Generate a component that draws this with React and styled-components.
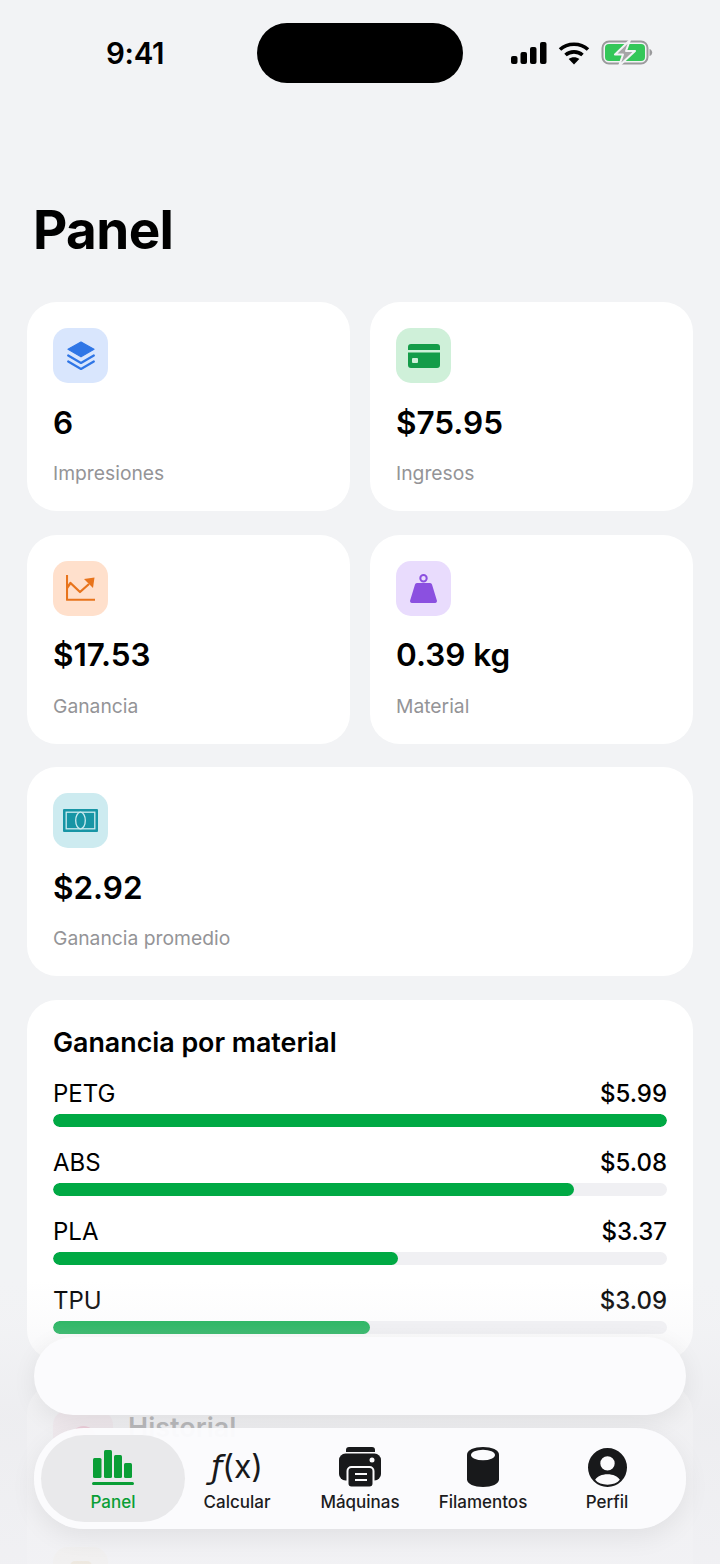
import React from 'react'
import styled, { createGlobalStyle } from 'styled-components'

const stats = [
  { value: '6', label: 'Impresiones', bg: '#d9e6fd', icon: 'layers' },
  { value: '$75.95', label: 'Ingresos', bg: '#cff0d9', icon: 'card' },
  { value: '$17.53', label: 'Ganancia', bg: '#ffe0cc', icon: 'chart' },
  { value: '0.39 kg', label: 'Material', bg: '#e9dcfd', icon: 'weight' },
  { value: '$2.92', label: 'Ganancia promedio', bg: '#cdebf0', icon: 'money', wide: true },
]

const materials = [
  { name: 'PETG', amount: 5.99 },
  { name: 'ABS', amount: 5.08 },
  { name: 'PLA', amount: 3.37 },
  { name: 'TPU', amount: 3.09 },
]

const StatIcon = ({ name }) => {
  if (name === 'layers') {
    return (
      <svg width="28" height="30" viewBox="0 0 28 30">
        <path d="M14 1 27 8.300 14 15.800 1 8.300Z" fill="#2f76e6" stroke="#2f76e6" strokeWidth="1.200" strokeLinejoin="round" />
        <path d="M1.200 14.500 14 22 26.800 14.500M1.200 20.500 14 28 26.800 20.500" fill="none" stroke="#2f76e6" strokeWidth="2.200" strokeLinecap="round" strokeLinejoin="round" />
      </svg>
    )
  }
  if (name === 'card') {
    return (
      <svg width="32" height="24" viewBox="0 0 32 24">
        <path d="M3 0h26a3 3 0 0 1 3 3v3H0V3a3 3 0 0 1 3-3ZM0 8.500h32V21a3 3 0 0 1-3 3H3a3 3 0 0 1-3-3Z" fill="#149c49" />
        <rect x="4" y="14" width="6" height="5" rx="1" fill="#cff0d9" />
      </svg>
    )
  }
  if (name === 'chart') {
    return (
      <svg width="29" height="26" viewBox="0 0 29 26">
        <path d="M1 0v24.800h27.500" fill="none" stroke="#e8741c" strokeWidth="2.100" strokeLinecap="round" strokeLinejoin="round" />
        <path d="M1 13 4.500 8 14 17 23 9" fill="none" stroke="#e8741c" strokeWidth="2.300" strokeLinejoin="round" />
        <path d="M18 4 28.500 2.500 27 13Z" fill="#e8741c" />
      </svg>
    )
  }
  if (name === 'weight') {
    return (
      <svg width="27" height="29" viewBox="0 0 27 29">
        <circle cx="13.500" cy="4.300" r="3.200" fill="none" stroke="#8b50e0" strokeWidth="2" />
        <path d="M7 9h13a2 2 0 0 1 2 1.600l4.800 15.600a2 2 0 0 1-2 2.800H2.200a2 2 0 0 1-2-2.800L5 10.600A2 2 0 0 1 7 9Z" fill="#8b50e0" />
      </svg>
    )
  }
  return (
    <svg width="35" height="23" viewBox="0 0 35 23">
      <rect width="35" height="23" rx="1" fill="#1795a5" />
      <rect x="3.200" y="3.200" width="28.600" height="16.600" fill="none" stroke="#cdebf0" strokeWidth="1.300" />
      <ellipse cx="17.500" cy="11.500" rx="4.800" ry="8.300" fill="#1795a5" stroke="#cdebf0" strokeWidth="1.300" />
    </svg>
  )
}

const TabIcon = ({ name }) => {
  if (name === 'panel') {
    return (
      <svg width="42" height="35" viewBox="0 0 42 35">
        <g fill="#0a9e36">
          <rect x="1" y="8" width="8.500" height="20" rx="1.500" />
          <rect x="12" y="0" width="8" height="28" rx="1.500" />
          <rect x="22" y="5" width="8" height="23" rx="1.500" />
          <rect x="32" y="13" width="8" height="15" rx="1.500" />
          <rect x="0" y="32" width="42" height="3" rx="1.500" />
        </g>
      </svg>
    )
  }
  if (name === 'printer') {
    return (
      <svg width="42" height="41" viewBox="0 0 42 41">
        <path d="M10 0h23a3 3 0 0 1 3 3v2H7V3a3 3 0 0 1 3-3Z" fill="#18191b" />
        <rect x="0" y="6.500" width="42" height="27" rx="6.500" fill="#18191b" />
        <circle cx="33" cy="13" r="2.500" fill="#fbfbfd" />
        <rect x="8.500" y="20" width="26" height="20.500" rx="4" fill="#18191b" stroke="#fbfbfd" strokeWidth="2" />
        <path d="M16 27h12M16 33h12" stroke="#fbfbfd" strokeWidth="2.200" />
      </svg>
    )
  }
  if (name === 'spool') {
    return (
      <svg width="32" height="40" viewBox="0 0 32 40">
        <path d="M16 0c8.800 0 16 3 16 7.500v25c0 4.500-7.200 7.500-16 7.500S0 37 0 32.500v-25C0 3 7.200 0 16 0Z" fill="#18191b" />
        <ellipse cx="16" cy="8" rx="12" ry="5.300" fill="#fbfbfd" />
      </svg>
    )
  }
  return (
    <svg width="39" height="39" viewBox="0 0 38 38">
      <path fillRule="evenodd" d="M19 0a19 19 0 1 1 0 38 19 19 0 0 1 0-38Zm0 8a7 7 0 1 0 0 14 7 7 0 0 0 0-14ZM7 31c2.500 3.200 7 4.800 12 4.800S28.500 34.200 31 31c-2-3.500-6.500-5.500-12-5.500S9 27.500 7 31Z" fill="#18191b" />
    </svg>
  )
}

const tabs = [
  { label: 'Panel', icon: 'panel', active: true },
  { label: 'Calcular', formula: true },
  { label: 'Máquinas', icon: 'printer' },
  { label: 'Filamentos', icon: 'spool' },
  { label: 'Perfil', icon: 'user' },
]

const App = () => {
  const top = Math.max(...materials.map((m) => m.amount))

  return (
    <Page>
      <GlobalStyle />
      <StatusBar>
        <Clock>9:41</Clock>
        <Island />
        <StatusIcons>
          <svg width="36" height="22" viewBox="0 0 36 22">
            <g fill="#000">
              <rect x="0" y="14" width="6.500" height="8" rx="2" />
              <rect x="9.500" y="10" width="6.500" height="12" rx="2" />
              <rect x="19" y="5" width="6.500" height="17" rx="2" />
              <rect x="29" y="0" width="6.500" height="22" rx="2" />
            </g>
          </svg>
          <svg width="32" height="24" viewBox="0 0 32 24">
            <path d="M2 8.500C9.500 1.500 22.500 1.500 30 8.500M7.500 14c4.600-4.200 12.400-4.200 17 0" fill="none" stroke="#000" strokeWidth="3.600" />
            <path d="M16 23.500 10.700 18c3-2.500 7.600-2.500 10.600 0Z" fill="#000" />
          </svg>
          <svg width="52" height="26" viewBox="0 0 52 26">
            <rect x="1.500" y="1.500" width="45" height="22" rx="6.500" fill="none" stroke="#9a9a9c" strokeWidth="2" />
            <rect x="4" y="4" width="40" height="17" rx="4" fill="#34c759" />
            <path d="M48.500 9c1.800.5 2.700 2 2.700 3.500S50.300 15.500 48.500 16Z" fill="#9a9a9c" />
            <path d="M29 0 14 14.500h8L18 26l16-15h-9Z" fill="#a5a5a7" stroke="#f2f3f5" strokeWidth="2" strokeLinejoin="round" />
          </svg>
        </StatusIcons>
      </StatusBar>

      <Title>Panel</Title>

      <Content>
        <StatGrid>
          {stats.map((s) => (
            <Card key={s.label} $wide={s.wide}>
              <IconTile $bg={s.bg}>
                <StatIcon name={s.icon} />
              </IconTile>
              <StatValue>{s.value}</StatValue>
              <StatLabel>{s.label}</StatLabel>
            </Card>
          ))}
        </StatGrid>

        <MaterialCard>
          <SectionTitle>Ganancia por material</SectionTitle>
          <MaterialList>
            {materials.map((m) => (
              <li key={m.name}>
                <MaterialRow>
                  <span>{m.name}</span>
                  <Amount>${m.amount.toFixed(2)}</Amount>
                </MaterialRow>
                <Track>
                  <Fill style={{ width: `${(m.amount / top) * 100}%` }} />
                </Track>
              </li>
            ))}
          </MaterialList>
        </MaterialCard>

        <LinkCard>
          <LinkRow>
            <LinkTile $bg="#fbdde6" $w={60}>
              <PinkDot />
            </LinkTile>
            <LinkTitle>Historial</LinkTitle>
          </LinkRow>
          <LinkRow>
            <LinkTile $bg="#faf0d6" $w={55}>
              <BeigeChip />
            </LinkTile>
          </LinkRow>
        </LinkCard>
      </Content>

      <BottomFade />
      <SearchPill />
      <TabBar>
        {tabs.map((t) => (
          <Tab key={t.label} $active={t.active}>
            <TabGlyph>
              {t.formula ? (
                <Formula>
                  <FormulaF>ƒ</FormulaF>(x)
                </Formula>
              ) : (
                <TabIcon name={t.icon} />
              )}
            </TabGlyph>
            <TabLabel $active={t.active}>{t.label}</TabLabel>
          </Tab>
        ))}
      </TabBar>
    </Page>
  )
}

const GlobalStyle = createGlobalStyle`
  html, body {
    margin: 0;
    padding: 0;
    background: #f2f3f5;
  }
  ul {
    margin: 0;
    padding: 0;
    list-style: none;
  }
`

const Page = styled.div`
  position: relative;
  width: 720px;
  height: 1564px;
  overflow: hidden;
  background: #f2f3f5;
  color: #000;
  font-family: Inter, "Liberation Sans", sans-serif;
`

const StatusBar = styled.div`
  display: flex;
  align-items: center;
  height: 60px;
  padding: 23px 67px 0 106px;
`

const Clock = styled.div`
  width: 151px;
  font-size: 29.5px;
  font-weight: 600;
  letter-spacing: -0.3px;
`

const Island = styled.div`
  width: 206px;
  height: 60px;
  border-radius: 30px;
  background: #000;
`

const StatusIcons = styled.div`
  display: flex;
  align-items: center;
  gap: 11px;
  margin-left: 48px;
`

const Title = styled.h1`
  margin: 113px 0 0 33px;
  font-size: 53px;
  line-height: 68px;
  font-weight: 700;
  letter-spacing: -0.6px;
`

const Content = styled.div`
  display: flex;
  flex-direction: column;
  gap: 24px;
  padding: 0 27px;
  margin-top: 38px;
`

const StatGrid = styled.div`
  display: grid;
  grid-template-columns: 1fr 1fr;
  gap: 23.5px 20px;
`

const Card = styled.div`
  grid-column: ${(p) => (p.$wide ? '1 / -1' : 'auto')};
  height: 209px;
  box-sizing: border-box;
  padding: 26px 26px 0;
  border-radius: 30px;
  background: #fff;
`

const IconTile = styled.div`
  display: flex;
  align-items: center;
  justify-content: center;
  width: 55px;
  height: 55px;
  border-radius: 15px;
  background: ${(p) => p.$bg};
`

const StatValue = styled.div`
  margin-top: 18.5px;
  font-size: 31.5px;
  line-height: 42px;
  font-weight: 600;
`

const StatLabel = styled.div`
  margin-top: 17.5px;
  font-size: 19.3px;
  line-height: 24px;
  color: #949497;
`

const MaterialCard = styled.div`
  padding: 26px;
  border-radius: 30px;
  background: #fff;
`

const SectionTitle = styled.h2`
  margin: 0;
  font-size: 26.8px;
  line-height: 32px;
  font-weight: 600;
`

const MaterialList = styled.ul`
  display: flex;
  flex-direction: column;
  gap: 19px;
  margin-top: 19px;
`

const MaterialRow = styled.div`
  display: flex;
  justify-content: space-between;
  align-items: center;
  height: 32px;
  font-size: 24px;
  margin-bottom: 5px;
`

const Amount = styled.span`
  font-weight: 550;
`

const Track = styled.div`
  height: 13px;
  border-radius: 7px;
  background: #f0f0f3;
  overflow: hidden;
`

const Fill = styled.div`
  height: 100%;
  border-radius: 7px;
  background: #00a944;
`

const LinkCard = styled.div`
  display: flex;
  flex-direction: column;
  gap: 81px;
  padding: 26px;
  border-radius: 30px;
  background: #fff;
`

const LinkRow = styled.div`
  display: flex;
  align-items: flex-start;
  gap: 15px;
`

const LinkTile = styled.div`
  display: flex;
  align-items: center;
  justify-content: center;
  flex: none;
  width: ${(p) => p.$w}px;
  height: 56px;
  border-radius: 15px;
  background: ${(p) => p.$bg};
`

const PinkDot = styled.div`
  width: 25px;
  height: 25px;
  border-radius: 50%;
  background: #ee5f8c;
`

const BeigeChip = styled.div`
  width: 22px;
  height: 29px;
  border-radius: 5px;
  background: #d9a63c;
`

const LinkTitle = styled.div`
  margin-top: 1px;
  font-size: 27px;
  line-height: 34px;
  font-weight: 600;
`

const BottomFade = styled.div`
  position: absolute;
  left: 0;
  right: 0;
  top: 1280px;
  bottom: 0;
  background: linear-gradient(
    to bottom,
    rgba(240, 240, 243, 0) 0,
    rgba(240, 240, 243, 0.22) 45px,
    rgba(236, 236, 239, 0.78) 135px,
    rgba(240, 240, 243, 0.9) 100%
  );
`

const SearchPill = styled.div`
  position: absolute;
  left: 34px;
  top: 1337px;
  width: 652px;
  height: 78px;
  border-radius: 39px;
  background: #fbfbfd;
  box-shadow: 0 6px 24px rgba(0, 0, 0, 0.07);
`

const TabBar = styled.nav`
  position: absolute;
  left: 34px;
  top: 1428px;
  width: 652px;
  height: 101px;
  box-sizing: border-box;
  display: grid;
  grid-template-columns: 144px 104px 142px 104px 1fr;
  padding: 7px;
  border-radius: 50px;
  background: rgba(251, 251, 253, 0.97);
  box-shadow: 0 8px 26px rgba(0, 0, 0, 0.07);
`

const Tab = styled.div`
  display: flex;
  flex-direction: column;
  align-items: center;
  border-radius: 44px;
  background: ${(p) => (p.$active ? '#e9e9eb' : 'transparent')};
`

const TabGlyph = styled.div`
  display: flex;
  align-items: center;
  justify-content: center;
  height: 42px;
  margin-top: 11px;
`

const Formula = styled.div`
  font-size: 32px;
  line-height: 38px;
  color: #18191b;
`

const FormulaF = styled.span`
  font-family: "DejaVu Sans", sans-serif;
  font-style: italic;
  font-weight: 400;
`

const TabLabel = styled.div`
  margin-top: 4px;
  font-size: 17px;
  line-height: 20px;
  font-weight: 500;
  white-space: nowrap;
  color: ${(p) => (p.$active ? '#0a9e36' : '#1c1c1e')};
`

export default App
